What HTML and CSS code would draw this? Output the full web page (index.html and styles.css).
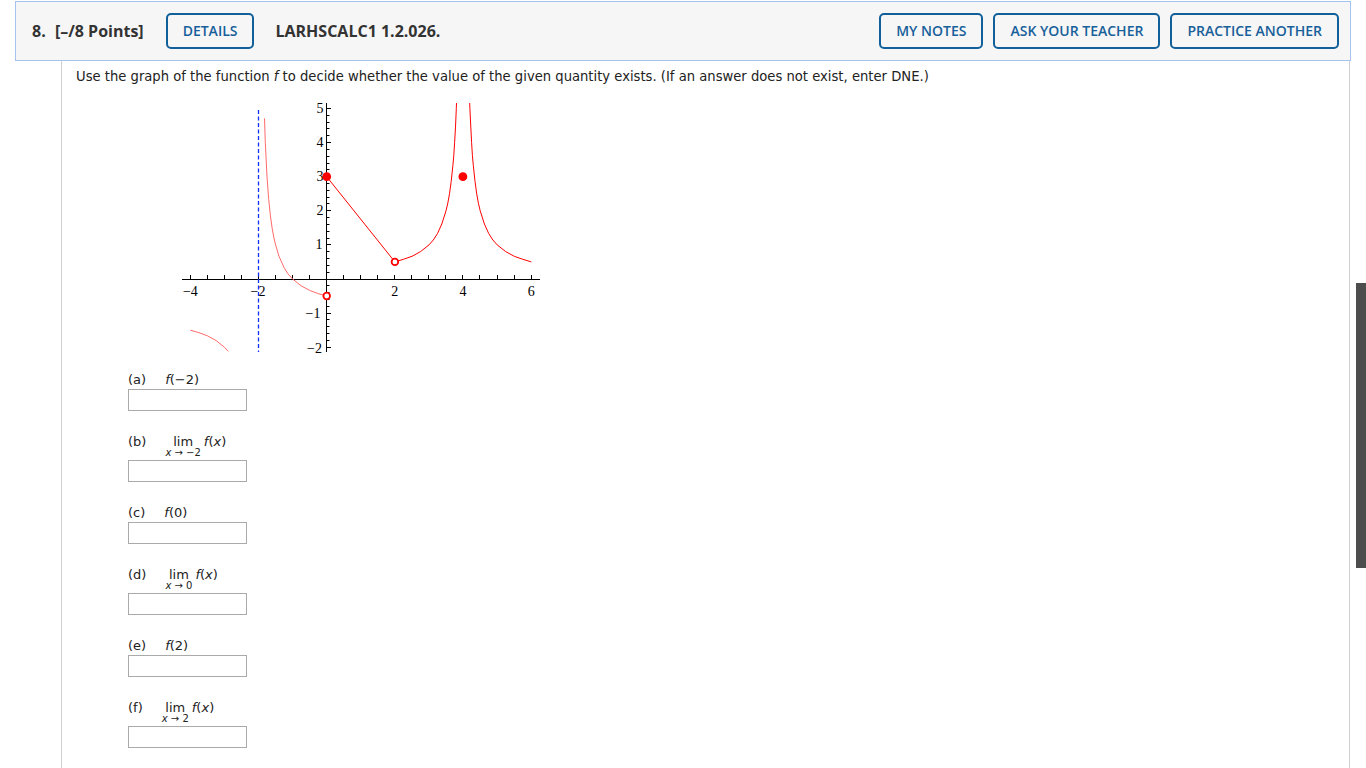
FILE: index.html
```html
<!DOCTYPE html>
<html lang="en">
<head>
<meta charset="utf-8">
<title>Question 8</title>
<link rel="stylesheet" href="styles.css">
</head>
<body>
<div class="qhead">
  <span class="qnum"><span class="qnum-n">8.</span> [–/8 Points]</span>
  <button class="btn btn-details">DETAILS</button>
  <span class="qcode">LARHSCALC1 1.2.026.</span>
  <div class="spacer"></div>
  <button class="btn btn-right">MY NOTES</button>
  <button class="btn btn-right">ASK YOUR TEACHER</button>
  <button class="btn btn-right">PRACTICE ANOTHER</button>
</div>
<div class="qbody">
  <p class="prompt">Use the graph of the function <i>f</i> to decide whether the value of the given quantity exists. (If an answer does not exist, enter DNE.)</p>
  <svg class="graph" viewBox="175 98 370 260" width="370" height="260" xmlns="http://www.w3.org/2000/svg">
    <path d="M182 279.5H540M326.5 103V352" stroke="#000" stroke-width="1" fill="none"/>
    <path stroke="#000" stroke-width="1" fill="none" d="M190.5 279v-4M207.5 279v-4M224.5 279v-4M241.5 279v-4M258.5 279v-4M275.5 279v-4M292.5 279v-4M309.5 279v-4M343.5 279v-4M360.5 279v-4M377.5 279v-4M394.5 279v-4M411.5 279v-4M428.5 279v-4M445.5 279v-4M462.5 279v-4M479.5 279v-4M497.5 279v-4M514.5 279v-4M531.5 279v-4"/>
    <path stroke="#000" stroke-width="1" fill="none" d="M327 347.5h4M327 340.5h2.5M327 333.5h2.5M327 326.5h2.5M327 319.5h2.5M327 313.5h4M327 306.5h2.5M327 299.5h2.5M327 292.5h2.5M327 285.5h2.5M327 272.5h2.5M327 265.5h2.5M327 258.5h2.5M327 251.5h2.5M327 244.5h4M327 238.5h2.5M327 231.5h2.5M327 224.5h2.5M327 217.5h2.5M327 210.5h4M327 203.5h2.5M327 197.5h2.5M327 190.5h2.5M327 183.5h2.5M327 176.5h4M327 169.5h2.5M327 163.5h2.5M327 156.5h2.5M327 149.5h2.5M327 142.5h4M327 135.5h2.5M327 128.5h2.5M327 122.5h2.5M327 115.5h2.5M327 108.5h4"/>
    <g class="axis-label" text-anchor="middle">
      <text x="190.4" y="296">−4</text>
      <text x="258" y="296">−2</text>
      <text x="394.7" y="296">2</text>
      <text x="463" y="296">4</text>
      <text x="531.3" y="296">6</text>
    </g>
    <g class="axis-label" text-anchor="end">
      <text x="323.5" y="113">5</text>
      <text x="323.5" y="147.1">4</text>
      <text x="323.5" y="181.2">3</text>
      <text x="323.5" y="215.3">2</text>
      <text x="322.5" y="249.4">1</text>
      <text x="320.5" y="317.6">−1</text>
      <text x="322" y="352.6">−2</text>
    </g>
    <line x1="258.5" y1="110" x2="258.5" y2="352" stroke="#1030ff" stroke-width="1.3" stroke-dasharray="4 2.5"/>
    <polyline fill="none" stroke="#ff6a6a" stroke-width="1" points="190.3,330.2 198.8,332.6 207.4,335.8 215.9,340.4 224.4,347.2 228.2,351.4"/>
    <polyline fill="none" stroke="#ff6a6a" stroke-width="1" stroke-linejoin="round" points="264.5,118.3 265.3,142.6 267,176.7 268.7,199.4 270.3,215 272.1,227.9 273.8,237.3 275.6,244.9 279,256.3 284.1,267.6 288,273.9 292.6,279 301.1,285.8 309.7,290.4 318.2,293.6 326.7,296"/>
    <line x1="326.7" y1="176.7" x2="394.9" y2="261.9" stroke="#ff0000" stroke-width="1"/>
    <polyline fill="none" stroke="#ff0000" stroke-width="1" stroke-linejoin="round" points="394.9,261.9 403.4,259.3 412,256.3 420.5,251.6 429,244.9 433.3,240 437.5,233.5 441.8,224 446,210.8 447.8,203.2 449.5,193.8 451.2,181.4 452.9,165.4 453.8,155.2 454.6,142.6 455.5,127.1 456.3,108.5 456.5,103"/>
    <polyline fill="none" stroke="#ff0000" stroke-width="1" stroke-linejoin="round" points="469.7,103 469.9,108.5 470.8,127.1 471.6,142.6 472.4,155.2 473.3,165.4 475,181.4 476.7,193.8 478.4,203.2 480.2,210.8 484.4,224 488.7,233.5 492.9,240 497.2,244.9 505.7,251.6 514.3,256.3 522.8,259.3 531.3,261.9"/>
    <circle cx="326.7" cy="176.7" r="4.4" fill="#ff0000"/>
    <circle cx="462.9" cy="176.7" r="4.4" fill="#ff0000"/>
    <circle cx="326.7" cy="296" r="3.3" fill="#fff" stroke="#ff0000" stroke-width="1.8"/>
    <circle cx="394.9" cy="261.9" r="3.3" fill="#fff" stroke="#ff0000" stroke-width="1.8"/>
  </svg>
  <div class="parts">
    <div class="part part-simple">
      <div class="plabel"><span class="tag">(a)</span><span class="math"><i>f</i>(−2)</span></div>
      <input class="ans" type="text">
    </div>
    <div class="part part-lim">
      <div class="plabel"><span class="tag">(b)</span><span class="lim"><span class="lim-word">lim</span><span class="lim-sub"><i>x</i> → −2</span></span><span class="math fx"><i>f</i>(<i>x</i>)</span></div>
      <input class="ans" type="text">
    </div>
    <div class="part part-simple">
      <div class="plabel"><span class="tag">(c)</span><span class="math"><i>f</i>(0)</span></div>
      <input class="ans" type="text">
    </div>
    <div class="part part-lim">
      <div class="plabel"><span class="tag">(d)</span><span class="lim"><span class="lim-word">lim</span><span class="lim-sub"><i>x</i> → 0</span></span><span class="math fx"><i>f</i>(<i>x</i>)</span></div>
      <input class="ans" type="text">
    </div>
    <div class="part part-simple">
      <div class="plabel"><span class="tag">(e)</span><span class="math"><i>f</i>(2)</span></div>
      <input class="ans" type="text">
    </div>
    <div class="part part-lim">
      <div class="plabel"><span class="tag">(f)</span><span class="lim"><span class="lim-word">lim</span><span class="lim-sub"><i>x</i> → 2</span></span><span class="math fx"><i>f</i>(<i>x</i>)</span></div>
      <input class="ans" type="text">
    </div>
  </div>
</div>
<div class="scroll-thumb"></div>
</body>
</html>
```
FILE: styles.css
```css
html, body {
  margin: 0;
  padding: 0;
  background: #fff;
  overflow: hidden;
}

.qhead {
  box-sizing: border-box;
  margin: 1px 0 0 15px;
  width: 1336px;
  height: 60px;
  border: 1px solid #a6c3ef;
  background: #f6f6f6;
  display: flex;
  align-items: center;
  padding: 0 11px 0 16px;
  font-family: "Open Sans", "Liberation Sans", sans-serif;
}

.qnum, .qcode {
  font-size: 16px;
  font-weight: 700;
  color: #333;
  white-space: nowrap;
}

.qnum-n {
  margin-right: 5px;
}

.qcode {
  margin-left: 21px;
}

.spacer {
  flex: 1;
}

.btn {
  box-sizing: border-box;
  height: 36px;
  padding: 0 15px 1px;
  border: 2px solid #12609a;
  border-radius: 5px;
  background: #f6f6f6;
  color: #17609a;
  font-family: "Open Sans", "Liberation Sans", sans-serif;
  font-size: 14px;
  font-weight: 600;
  white-space: nowrap;
}

.btn-details {
  margin-left: 22px;
}

.btn-right {
  margin-left: 10px;
}

.qbody {
  box-sizing: border-box;
  margin-left: 61px;
  width: 1289px;
  height: 707px;
  border-left: 1px solid #cfcfcf;
  border-right: 1px solid #cfcfcf;
  padding: 8px 14px 0;
  font-family: "DejaVu Sans", Verdana, sans-serif;
  color: #222;
}

.prompt {
  margin: 0;
  font-size: 13.17px;
  line-height: 16px;
}

.graph {
  display: block;
  margin: 13px 0 0 99px;
}

.axis-label {
  font-family: "Liberation Serif", "Times New Roman", serif;
  font-size: 14px;
  fill: #000;
}

.parts {
  margin-left: 52px;
}

.part-simple {
  margin-top: 20px;
}

.part-lim {
  margin-top: 21px;
}

.part:first-child {
  margin-top: 11px;
}

.plabel {
  display: flex;
  align-items: flex-start;
  font-size: 13px;
  line-height: 20px;
  height: 20px;
}

.part-simple .plabel {
  line-height: 22px;
}

.part-lim .plabel {
  height: 28px;
}

.tag {
  margin-right: 19px;
}

.lim {
  display: inline-flex;
  flex-direction: column;
  align-items: center;
}

.lim-word {
  line-height: 20px;
}

.lim-sub {
  font-size: 10px;
  line-height: 10px;
  margin-top: -4px;
  white-space: nowrap;
}

.fx {
  margin-left: 3px;
}

.ans {
  display: block;
  box-sizing: border-box;
  width: 119px;
  height: 22px;
  margin: 0;
  padding: 0;
  border: 1px solid #aaa;
  background: #fff;
}

.scroll-thumb {
  position: fixed;
  left: 1356px;
  top: 283px;
  width: 10px;
  height: 285px;
  background: #4d4d4d;
}
```
